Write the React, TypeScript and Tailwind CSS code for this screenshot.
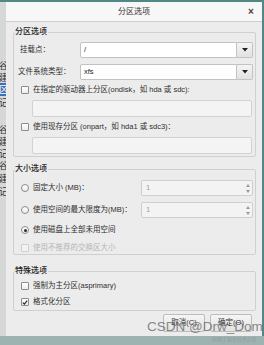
import React from "react";

function Check({ checked = false, disabled = false }: { checked?: boolean; disabled?: boolean }) {
  return (
    <span
      className={
        "flex h-[8px] w-[8px] shrink-0 items-center justify-center rounded-[1px] border " +
        (disabled ? "border-[#d0d0d0] bg-[#f2f2f2]" : "border-[#8c8c8c] bg-gradient-to-b from-[#ffffff] to-[#ececec]")
      }
    >
      {checked && (
        <svg width="7" height="7" viewBox="0 0 7 7">
          <path d="M1 3.6 L2.8 5.4 L6 1.4" stroke="#2a2a2a" strokeWidth="1.4" fill="none" />
        </svg>
      )}
    </span>
  );
}

function Radio({ checked = false }: { checked?: boolean }) {
  return (
    <span className="flex h-[8px] w-[8px] shrink-0 items-center justify-center rounded-full border border-[#8c8c8c] bg-gradient-to-b from-[#ffffff] to-[#ececec]">
      {checked && <span className="h-[3px] w-[3px] rounded-full bg-[#2a2a2a]" />}
    </span>
  );
}

function Combo({ value }: { value: string }) {
  return (
    <div className="flex h-[16px] flex-1">
      <div className="flex flex-1 items-center rounded-l-[2px] border border-[#c2c2c2] bg-white pl-[3px] text-[#222]">
        {value}
      </div>
      <div className="flex w-[16px] items-center justify-center rounded-r-[2px] border border-l-0 border-[#c2c2c2] bg-gradient-to-b from-[#f4f4f4] to-[#e2e2e2]">
        <svg width="6" height="4" viewBox="0 0 6 4">
          <path d="M0 0 L6 0 L3 3.5 Z" fill="#222" />
        </svg>
      </div>
    </div>
  );
}

function Spin() {
  return (
    <div className="flex h-[16px] w-[112px] shrink-0 items-center rounded-[2px] border border-[#cfcfcf] bg-[#f3f3f3]">
      <span className="flex-1 pl-[4px] text-[#a0a0a0]">1</span>
      <div className="flex w-[9px] flex-col items-center justify-center gap-[3px]">
        <svg width="4" height="3" viewBox="0 0 4 3">
          <path d="M0 3 L4 3 L2 0 Z" fill="#9a9a9a" />
        </svg>
        <svg width="4" height="3" viewBox="0 0 4 3">
          <path d="M0 0 L4 0 L2 3 Z" fill="#9a9a9a" />
        </svg>
      </div>
    </div>
  );
}

function Entry() {
  return <div className="ml-[12px] mr-[1px] h-[17px] rounded-[2px] border border-[#d2d2d2] bg-[#f4f4f4]" />;
}

const leftChars = [
  { c: "谷", h: 12, blue: false },
  { c: "建", h: 11, blue: false },
  { c: "区", h: 13, blue: true },
  { c: "记", h: 14, blue: false },
  { c: "", h: 14, blue: false },
  { c: "谷", h: 12, blue: false },
  { c: "建", h: 12, blue: false },
  { c: "记", h: 12, blue: false },
  { c: "谷", h: 12, blue: false },
  { c: "建", h: 13, blue: false },
  { c: "记", h: 13, blue: false },
];

export default function App() {
  return (
    <div className="relative h-[345px] w-[264px] overflow-hidden bg-[#9db3b1] font-['Liberation_Sans','Noto_Sans_CJK_SC',sans-serif] text-[7.5px] leading-[10px] text-[#2e2e2e]">
      <div className="h-[2px] bg-[#4f8884]" />
      <div className="flex h-[334px]">
        {/* background app strip */}
        <div className="flex w-[6px] flex-col overflow-hidden bg-[#d6d8d8] pt-[58px]">
          {leftChars.map((r, i) => (
            <div
              key={i}
              className={"flex items-center justify-end text-[9px] " + (r.blue ? "bg-[#3d6fb3] text-white" : "text-[#333]")}
              style={{ height: r.h }}
            >
              <span className="-mr-[2px] shrink-0 whitespace-nowrap">{r.c}</span>
            </div>
          ))}
        </div>
        {/* dialog */}
        <div className="flex w-[256px] flex-col bg-[#ececec]">
          <div className="flex h-[20px] items-center border-b border-[#cdcdcd] bg-[#f7f7f7]">
            <div className="flex-1 pl-[20px] text-center text-[8px] text-[#333]">分区选项</div>
            <div className="w-[20px] pr-[2px] text-center text-[10px] font-bold text-[#444]">×</div>
          </div>
          <div className="flex flex-1 flex-col pl-[7px] pr-[6px] pt-[5px]">
            {/* section 1 */}
            <fieldset className="rounded-[2px] border border-[#d0d0d0] px-[6px] pb-[2px] pr-[2px]">
              <legend className="-ml-[5px] pr-[1px] text-[8px] font-medium text-[#222]">分区选项</legend>
              <div className="flex flex-col pt-[5px]">
                <div className="flex items-center">
                  <span className="w-[60px] whitespace-nowrap">挂载点：</span>
                  <Combo value="/" />
                </div>
                <div className="mt-[6px] flex items-center">
                  <span className="-ml-[2px] w-[62px] whitespace-nowrap">文件系统类型：</span>
                  <Combo value="xfs" />
                </div>
                <div className="mt-[5px] flex h-[10px] items-center gap-[4px] pl-[1px]">
                  <Check />
                  <span className="whitespace-nowrap">在指定的驱动器上分区(ondisk，如 hda 或 sdc):</span>
                </div>
                <div className="mt-[5px]">
                  <Entry />
                </div>
                <div className="mt-[5px] flex h-[10px] items-center gap-[4px] pl-[1px]">
                  <Check />
                  <span className="whitespace-nowrap">使用现存分区 (onpart，如 hda1 或 sdc3)：</span>
                </div>
                <div className="mt-[5px]">
                  <Entry />
                </div>
              </div>
            </fieldset>

            {/* section 2 */}
            <fieldset className="mt-[7px] rounded-[2px] border border-[#d0d0d0] px-[6px] pb-[1px] pr-[2px]">
              <legend className="-ml-[5px] pr-[1px] text-[8px] font-medium text-[#222]">大小选项</legend>
              <div className="flex flex-col pt-[6px]">
                <div className="flex items-center gap-[4px] pl-[1px]">
                  <Radio />
                  <span className="flex-1 whitespace-nowrap">固定大小 (MB)：</span>
                  <Spin />
                </div>
                <div className="mt-[6px] flex items-center gap-[4px] pl-[1px]">
                  <Radio />
                  <span className="flex-1 whitespace-nowrap">使用空间的最大限度为(MB)：</span>
                  <Spin />
                </div>
                <div className="mt-[7px] flex h-[10px] items-center gap-[4px] pl-[1px]">
                  <Radio checked />
                  <span className="whitespace-nowrap">使用磁盘上全部未用空间</span>
                </div>
                <div className="mt-[8px] flex h-[10px] items-center gap-[4px] pl-[1px]">
                  <Check disabled />
                  <span className="whitespace-nowrap text-[#b6b6b6]">使用不推荐的交换区大小</span>
                </div>
              </div>
            </fieldset>

            {/* section 3 */}
            <fieldset className="mt-[11px] rounded-[2px] border border-[#d0d0d0] px-[6px] pb-[3px] pr-[2px]">
              <legend className="-ml-[5px] pr-[1px] text-[8px] font-medium text-[#222]">特殊选项</legend>
              <div className="flex flex-col pt-[5px]">
                <div className="flex h-[10px] items-center gap-[4px] pl-[1px]">
                  <Check />
                  <span className="whitespace-nowrap">强制为主分区(asprimary)</span>
                </div>
                <div className="mt-[6px] flex h-[10px] items-center gap-[4px] pl-[1px]">
                  <Check checked />
                  <span className="whitespace-nowrap">格式化分区</span>
                </div>
              </div>
            </fieldset>

            <div className="mt-[3px] flex justify-end gap-[5px] pr-[4px]">
              <div className="flex h-[18px] w-[42px] items-center justify-center whitespace-nowrap rounded-[2px] border border-[#bdbdbd] bg-gradient-to-b from-[#f5f5f5] to-[#e3e3e3]">
                取消(C)
              </div>
              <div className="flex h-[18px] w-[42px] items-center justify-center whitespace-nowrap rounded-[2px] border border-[#bdbdbd] bg-gradient-to-b from-[#f5f5f5] to-[#e3e3e3]">
                确定(O)
              </div>
            </div>
          </div>
        </div>
        <div className="flex-1 bg-[#4f8884]" />
      </div>

      {/* watermarks */}
      <div className="absolute left-[147px] top-[319px] whitespace-nowrap font-['Liberation_Sans',sans-serif] text-[13.5px] leading-[16px] text-[#6a6a6a]/80">
        CSDN @Drw_Dom
      </div>
      <div className="absolute left-[212px] top-[336px] whitespace-nowrap text-[5px] leading-[7px] text-[#9a9a9a]">@稀土掘金技术社区</div>
    </div>
  );
}
